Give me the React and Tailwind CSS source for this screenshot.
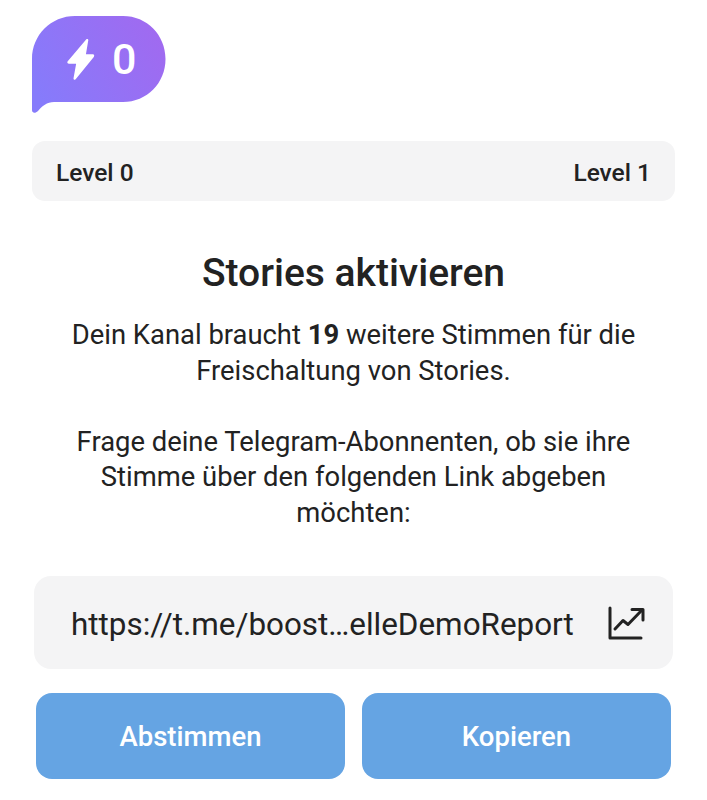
import React from 'react';

const BubbleShape = () => (
  <svg className="absolute inset-0" width="134" height="98" viewBox="0 0 134 98">
    <defs>
      <linearGradient id="boost" x1="0" y1="0.7" x2="1" y2="0.3">
        <stop offset="0" stopColor="#867bfb" />
        <stop offset="1" stopColor="#a06af0" />
      </linearGradient>
    </defs>
    <path
      d="M0 43C0 19 19 0 43 0H91C115 0 133.500 19 133.500 43C133.500 67 115 86 91 86H22C15 86 10 90 6 95C3 98 0 97 0 94Z"
      fill="url(#boost)"
    />
  </svg>
);

const BoltIcon = () => (
  <svg width="28" height="45" viewBox="0 0 30 46" fill="white">
    <path d="M20.500 1.500C21.500 0.500 23 1 22.800 2.500L20.300 17.500H27.500C29 17.500 29.600 19 28.700 20.200L9.500 44C8.500 45.200 6.800 44.500 7 43L9.800 27.500H2C0.500 27.500 -0.200 26 0.800 24.800Z" />
  </svg>
);

const ChartIcon = () => (
  <svg width="38" height="34" viewBox="0 0 38 34" fill="none" stroke="#222222" strokeWidth="3" strokeLinecap="round" strokeLinejoin="round">
    <path d="M2 2V32H33" />
    <path d="M7 23L15 14.500L20 18.500L34 4" />
    <path d="M24 3.500H35V14" />
  </svg>
);

export default function App() {
  return (
    <div className="w-[707px] h-[800px] bg-white overflow-hidden font-['Roboto',sans-serif] text-[#222222]">
      <div className="pt-4 pl-8">
        <div className="relative w-[134px] h-[98px]">
          <BubbleShape />
          <div className="relative flex items-center h-[86px] pl-[35px] gap-[17px]">
            <BoltIcon />
            <span className="text-white text-[43px] font-medium leading-none">0</span>
          </div>
        </div>
      </div>

      <div className="mt-[27px] mx-8 h-[60px] rounded-[13px] bg-[#f4f4f5] flex items-center justify-between pl-6 pr-6 pt-1 text-[24.500px] font-medium">
        <span>Level 0</span>
        <span>Level 1</span>
      </div>

      <h1 className="mt-[49px] text-center text-[39px] leading-[46px] font-medium">Stories aktivieren</h1>

      <div className="mt-[22px] text-center text-[27.400px] leading-[35.500px]">
        <p>
          Dein Kanal braucht <b className="font-bold">19</b> weitere Stimmen für die
          <br />
          Freischaltung von Stories.
        </p>
        <p className="mt-[35.500px]">
          Frage deine Telegram-Abonnenten, ob sie ihre
          <br />
          Stimme über den folgenden Link abgeben
          <br />
          möchten:
        </p>
      </div>

      <div className="mt-[45px] mx-[34px] h-[93px] rounded-[17px] bg-[#f4f4f5] flex items-center justify-between pl-[37px] pr-[27px]">
        <span className="text-[31.400px] leading-none pt-1">https://t.me/boost…elleDemoReport</span>
        <ChartIcon />
      </div>

      <div className="mt-6 mx-9 flex gap-[17px]">
        <button className="flex-1 h-[86px] rounded-[16px] bg-[#65a4e3] text-white text-[27.500px] font-medium pt-0.5">Abstimmen</button>
        <button className="flex-1 h-[86px] rounded-[16px] bg-[#65a4e3] text-white text-[27.500px] font-medium pt-0.5">Kopieren</button>
      </div>
    </div>
  );
}
